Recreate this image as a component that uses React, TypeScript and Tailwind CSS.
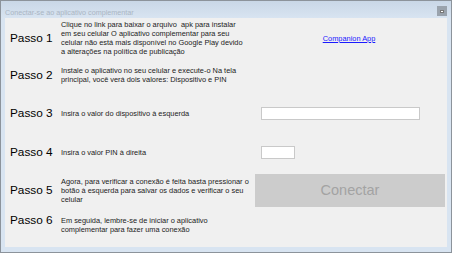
const Desc = ({ lines }: { lines: string[] }) => (
  <div className="w-[190px] shrink-0 text-[7.4px] leading-[9px] text-[#222] whitespace-pre">
    {lines.map((l, i) => (
      <div key={i}>{l}</div>
    ))}
  </div>
);

const Label = ({ n, className = "" }: { n: number; className?: string }) => (
  <div className={`w-[56px] shrink-0 pl-[5px] text-[11.8px] leading-[15px] text-black whitespace-nowrap ${className}`}>
    Passo {n}
  </div>
);

const App = () => {
  return (
    <div className="w-[452px] h-[253px] border border-[#8c939b] bg-[#d8e4f1] flex flex-col font-['Liberation_Sans',Arial,sans-serif] overflow-hidden">
      {/* title bar */}
      <div className="h-[17px] shrink-0 flex justify-between pl-[4px] pr-[4px] bg-gradient-to-b from-[#c9d7e7] to-[#d8e4f1]">
        <div className="pt-[7px] text-[7.2px] leading-[9px] text-[#aab5c3] whitespace-nowrap">
          Conectar-se ao aplicativo complementar
        </div>
        <div className="mt-[5px] w-[10px] h-[10px] bg-[#9aa3ad] flex items-center justify-center">
          <div className="w-[4px] h-[3px] bg-white border-[0.5px] border-[#777]" />
        </div>
      </div>

      <div className="flex flex-1 px-[4px]">
        {/* client area */}
        <div className="w-[442px] h-[229px] bg-[#f0f0f0] flex flex-col">
          <div className="h-[40px] flex items-center">
            <Label n={1} />
            <Desc
              lines={[
                "Clique no link para baixar o arquivo  apk para instalar",
                "em seu celular O aplicativo complementar para seu",
                "celular não está mais disponível no Google Play devido",
                "a alterações na política de publicação",
              ]}
            />
            <div className="flex-1 flex justify-center">
              <a className="text-[7.4px] leading-[9px] text-[#1a1aff] underline cursor-pointer">Companion App</a>
            </div>
          </div>

          <div className="h-[34px] flex items-center">
            <Label n={2} />
            <Desc
              lines={[
                "Instale o aplicativo no seu celular e execute-o Na tela",
                "principal, você verá dois valores: Dispositivo e PIN",
              ]}
            />
          </div>

          <div className="h-[42px] flex items-center">
            <Label n={3} />
            <Desc lines={["Insira o valor do dispositivo à esquerda"]} />
            <div className="ml-[10px] w-[159px] h-[13px] bg-white border border-[#c9c9c9]" />
          </div>

          <div className="h-[36px] flex items-center">
            <Label n={4} />
            <Desc lines={["Insira o valor PIN à direita"]} />
            <div className="ml-[10px] w-[34px] h-[13px] bg-white border border-[#c9c9c9]" />
          </div>

          <div className="h-[40px] flex items-center">
            <Label n={5} />
            <Desc
              lines={[
                "Agora, para verificar a conexão é feita basta pressionar o",
                "botão à esquerda para salvar os dados e verificar o seu",
                "celular",
              ]}
            />
            <button className="ml-[4px] w-[190px] h-[33px] bg-[#cccccc] text-[#a3a3a3] text-[14.5px] leading-[33px] text-center">
              Conectar
            </button>
          </div>

          <div className="flex items-start">
            <Label n={6} className="mt-[3px]" />
            <div className="mt-[6px]">
              <Desc
                lines={[
                  "Em seguida, lembre-se de iniciar o aplicativo",
                  "complementar para fazer uma conexão",
                ]}
              />
            </div>
          </div>
        </div>
      </div>
    </div>
  );
};

export default App;
